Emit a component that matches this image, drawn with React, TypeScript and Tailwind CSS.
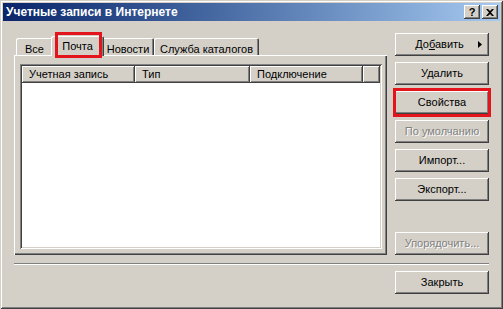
import React from "react";

const raised =
  "shadow-[inset_-1px_-1px_0_#404040,inset_1px_1px_0_#ffffff,inset_-2px_-2px_0_#808080,inset_2px_2px_0_#d4d0c8]";

function Btn({
  children,
  disabled,
  marked,
  className = "",
}: {
  children: React.ReactNode;
  disabled?: boolean;
  marked?: boolean;
  className?: string;
}) {
  return (
    <div
      className={`relative flex h-[23px] w-[94px] shrink-0 items-center justify-center bg-[#d4d0c8] text-[11px] leading-none ${raised} ${
        disabled ? "text-[#808080] [text-shadow:1px_1px_0_#ffffff]" : "text-black"
      } ${className}`}
    >
      {children}
      {marked && <span className="absolute -top-[3px] -bottom-[3px] -left-[2px] -right-[2px] border-[3px] border-[#e3141b]" />}
    </div>
  );
}

const tabs = [
  { label: "Все", w: "w-[37px]" },
  { label: "Почта", w: "w-[53px]", active: true },
  { label: "Новости", w: "w-[52px]" },
  { label: "Служба каталогов", w: "w-[105px]" },
];

const columns = [
  { label: "Учетная запись", w: "w-[113px]" },
  { label: "Тип", w: "w-[115px]" },
  { label: "Подключение", w: "w-[113px]" },
];

export default function App() {
  return (
    <div
      className="flex h-[309px] w-[503px] flex-col bg-[#d4d0c8] p-[3px] shadow-[inset_1px_1px_0_#d4d0c8,inset_-1px_-1px_0_#404040,inset_2px_2px_0_#ffffff,inset_-2px_-2px_0_#808080] text-[11px] text-black"
      style={{ fontFamily: '"Liberation Sans", Arial, sans-serif' }}
    >
      {/* Title bar */}
      <div className="flex h-[18px] items-center bg-gradient-to-r from-[#0a246a] to-[#a6caf0] pl-[3px] pr-[2px]">
        <span className="flex-1 text-[12px] font-bold text-white">Учетные записи в Интернете</span>
        <div className={`flex h-[14px] w-[16px] items-center justify-center bg-[#d4d0c8] text-[11px] font-bold leading-none ${raised}`}>
          ?
        </div>
        <div className={`ml-[2px] flex h-[14px] w-[16px] items-center justify-center bg-[#d4d0c8] ${raised}`}>
          <svg width="8" height="7" viewBox="0 0 8 7">
            <path d="M0 0h2l2 2 2-2h2L5 3.5 8 7H6L4 5 2 7H0l3-3.5z" fill="#000" />
          </svg>
        </div>
      </div>

      {/* Body */}
      <div className="mt-[12px] flex h-[222px] gap-[8px] px-[11px]">
        {/* Tabs + panel */}
        <div className="flex w-[373px] flex-col pt-[3px]">
          <div className="relative z-10 flex h-[19px] items-end pl-[2px]">
            {tabs.map((t) =>
              t.active ? (
                <div
                  key={t.label}
                  className={`relative -mx-[2px] -mb-[1px] flex h-[20px] ${t.w} justify-center bg-[#d4d0c8] pt-[2px] shadow-[inset_1px_1px_0_#ffffff,inset_-1px_0_0_#404040,inset_-2px_0_0_#808080] rounded-t-[2px]`}
                >
                  {t.label}
                  <span className="absolute -top-[4px] -bottom-[2px] left-[4px] right-[2px] border-[3px] border-[#e3141b]" />
                </div>
              ) : (
                <div
                  key={t.label}
                  className={`flex h-[17px] ${t.w} justify-center bg-[#d4d0c8] pt-[3px] shadow-[inset_1px_1px_0_#ffffff,inset_-1px_0_0_#404040,inset_-2px_0_0_#808080] rounded-t-[2px]`}
                >
                  {t.label}
                </div>
              )
            )}
          </div>
          <div className="flex flex-1 flex-col pb-[6px] pl-[6px] pr-[5px] pt-[9px] shadow-[inset_1px_1px_0_#ffffff,inset_-1px_-1px_0_#404040,inset_-2px_-2px_0_#808080]">
            <div className="flex flex-1 flex-col bg-white p-[2px] shadow-[inset_1px_1px_0_#808080,inset_-1px_-1px_0_#ffffff,inset_2px_2px_0_#404040,inset_-2px_-2px_0_#d4d0c8]">
              <div className="flex h-[17px]">
                {columns.map((c) => (
                  <div
                    key={c.label}
                    className={`flex ${c.w} items-center bg-[#d4d0c8] pl-[7px] ${raised}`}
                  >
                    {c.label}
                  </div>
                ))}
                <div className={`flex-1 bg-[#d4d0c8] ${raised}`} />
              </div>
              <div className="flex-1 bg-white" />
            </div>
          </div>
        </div>

        {/* Buttons */}
        <div className="flex w-[94px] flex-col gap-[6px]">
          <Btn className="!justify-start pl-[6px] pr-[7px]">
            <span className="flex-1 text-center">
              До<span className="underline">б</span>авить
            </span>
            <svg width="4" height="7" viewBox="0 0 4 7">
              <path d="M0 0l4 3.5L0 7z" fill="#000" />
            </svg>
          </Btn>
          <Btn>Удалить</Btn>
          <Btn marked>Свойства</Btn>
          <Btn disabled>По умолчанию</Btn>
          <Btn>Импорт...</Btn>
          <Btn>Экспорт...</Btn>
          <Btn disabled className="mt-auto">
            Упорядочить...
          </Btn>
        </div>
      </div>

      {/* Separator */}
      <div className="mx-[11px] mt-[8px] h-[2px] border-t border-b border-t-[#808080] border-b-white" />

      {/* Footer */}
      <div className="mt-[6px] flex justify-end px-[11px]">
        <Btn>Закрыть</Btn>
      </div>
    </div>
  );
}
